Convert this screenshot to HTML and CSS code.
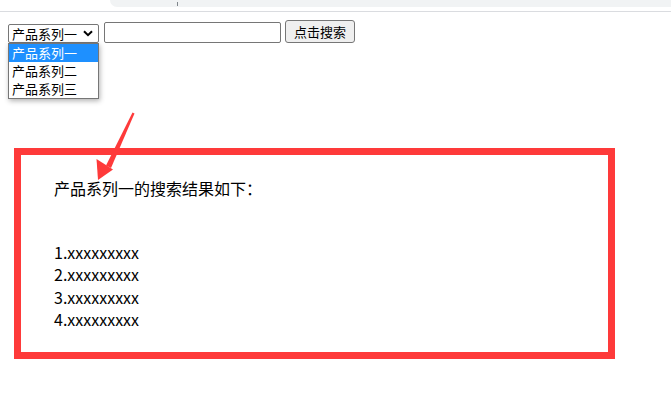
FILE: index.html
```html
<!DOCTYPE html>
<html lang="zh-CN">
<head>
  <meta charset="UTF-8" />
  <meta name="viewport" content="width=device-width, initial-scale=1.0" />
  <title>产品搜索</title>
  <link rel="stylesheet" href="styles.css">
</head>
<body>
  <div class="chrome">
    <div class="addr"><span class="tick"></span></div>
  </div>

  <div class="toolbar">
    <div class="select-wrap">
      <div class="select-box">
        <span>产品系列一</span>
        <svg class="chev" width="10" height="7" viewBox="0 0 10 7"><path d="M1 1.2 L5 5.2 L9 1.2" fill="none" stroke="#000" stroke-width="2"/></svg>
      </div>
      <ul class="dropdown">
        <li class="active">产品系列一</li>
        <li>产品系列二</li>
        <li>产品系列三</li>
      </ul>
    </div>
    <input type="text" class="search-input">
    <button class="search-btn">点击搜索</button>
  </div>

  <div class="result">
    <p class="result-title">产品系列一的搜索结果如下：</p>
    <ul class="result-list">
      <li>1.xxxxxxxxx</li>
      <li>2.xxxxxxxxx</li>
      <li>3.xxxxxxxxx</li>
      <li>4.xxxxxxxxx</li>
    </ul>
  </div>

  <!-- annotation arrow -->
  <svg class="arrow" width="60" height="80" viewBox="0 0 60 80">
    <path d="M52.5 2.5 L54.5 3.5 L31 58 L26 55.5 Z" fill="#fe3a3a"/>
    <path d="M16.5 49 L33 59.5 L18 70 Z" fill="#fe3a3a"/>
  </svg>
</body>
</html>
```

FILE: styles.css
```css
body {
  margin: 0;
  font-family: "Noto Sans CJK SC", "Noto Sans", sans-serif;
  color: #000;
  background: #fff;
}

.chrome {
  height: 11px;
  border-bottom: 1px solid #dadce0;
  position: relative;
}

.addr {
  margin-left: 110px;
  height: 7px;
  background: #f1f3f4;
  border-bottom-left-radius: 8px;
  position: relative;
}

.tick {
  position: absolute;
  left: 67px;
  top: 2px;
  width: 1px;
  height: 4px;
  background: #80868b;
}

.toolbar {
  display: flex;
  align-items: center;
  padding: 8px 8px 0;
  height: 23px;
}

.select-wrap {
  position: relative;
  margin-top: 3px;
}

.select-box {
  width: 91px;
  height: 19px;
  box-sizing: border-box;
  border: 1px solid #767676;
  border-radius: 2px;
  display: flex;
  align-items: center;
  justify-content: space-between;
  padding: 0 5px 0 3px;
  font-size: 13px;
  line-height: 17px;
}

.chev {
  display: block;
}

.dropdown {
  position: absolute;
  left: 0;
  top: 19px;
  width: 91px;
  box-sizing: border-box;
  margin: 0;
  padding: 0;
  list-style: none;
  border: 1px solid #767676;
  background: #fff;
  box-shadow: 1px 2px 5px rgba(0, 0, 0, 0.3);
  font-size: 13px;
  z-index: 5;
}

.dropdown li {
  height: 18px;
  line-height: 18px;
  padding-left: 3px;
}

.dropdown li.active {
  background: #1e90ff;
  color: #fff;
}

.search-input {
  width: 177px;
  height: 21px;
  box-sizing: border-box;
  margin: 1px 0 0 5px;
  border: 1px solid #767676;
  border-radius: 2px;
  padding: 0;
}

.search-btn {
  width: 70px;
  height: 23px;
  margin-left: 4px;
  box-sizing: border-box;
  border: 1px solid #767676;
  border-radius: 3px;
  background: #efefef;
  font-family: inherit;
  font-size: 13px;
  line-height: 19px;
  padding: 0;
  color: #000;
}

.result {
  margin: 105px 0 0 14px;
  width: 601px;
  height: 211px;
  box-sizing: border-box;
  border: 7px solid #fe3a3a;
  padding: 22px 33px 0;
  font-size: 16px;
}

.result-title {
  margin: 0;
  line-height: 22px;
}

.result-list {
  list-style: none;
  margin: 42px 0 0;
  padding: 0;
  line-height: 22.4px;
}

.arrow {
  position: absolute;
  left: 80px;
  top: 110px;
}
```
